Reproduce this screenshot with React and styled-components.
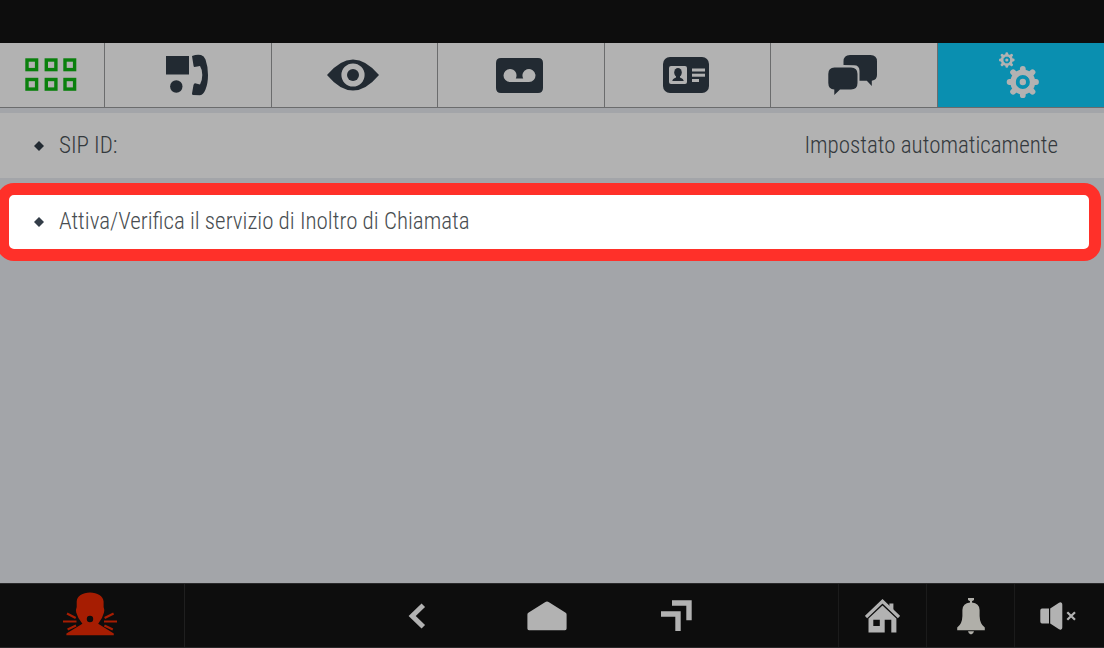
import React from "react";
import styled, { createGlobalStyle } from "styled-components";

const GlobalStyle = createGlobalStyle`
  *, *::before, *::after { box-sizing: border-box; }
  body {
    margin: 0;
    background: #a3a5a9;
    font-family: "Roboto Condensed", Roboto, "Liberation Sans", sans-serif;
    font-weight: 300;
  }
  button { font: inherit; color: inherit; border: 0; margin: 0; padding: 0; background: none; cursor: pointer; }
`;

const Screen = styled.div`
  display: flex;
  flex-direction: column;
  min-height: 100vh;
  overflow: hidden;
`;

const StatusBar = styled.header`
  height: 43px;
  background: #0d0d0d;
`;

const Tabs = styled.nav`
  display: grid;
  grid-template-columns: 105px repeat(6, 1fr);
  height: 65px;
  border-bottom: 1px solid #6b6c6d;
  background: #b2b2b2;
`;

const Tab = styled.button`
  && {
    display: flex;
    align-items: center;
    justify-content: center;
    padding: 0 2px 0 0;
    color: ${(p) => (p.$active ? "#b2b2b2" : "#222a32")};
    background: ${(p) => (p.$active ? "#0a8fb0" : "transparent")};
    border-right: ${(p) => (p.$active ? "0" : "1px solid #6b6c6d")};
  }
`;

const Icon = styled.svg`
  display: block;
  flex: none;
  fill: currentColor;
`;

const Content = styled.main`
  flex: 1;
  display: flex;
  flex-direction: column;
  gap: 5px;
  padding-top: 5px;
`;

const Row = styled.div`
  display: flex;
  align-items: center;
  width: 100%;
  height: 65px;
  padding: 0 46px 0 34px;
  background: #b2b2b2;
  color: #34393d;
  font-size: 23px;
  line-height: 32px;
`;

const HighlightedRow = styled.button`
  && {
    display: flex;
    align-items: center;
    height: 78px;
    margin: 0 3px 0 -3px;
    padding: 0 25px;
    border: 12px solid #ff3029;
    border-radius: 17px;
    background: #ffffff;
    color: #484d51;
    font-size: 23px;
    line-height: 32px;
    text-align: left;
  }
`;

const Label = styled.span`
  margin-left: 15px;
`;

const Value = styled.span`
  margin-left: auto;
`;

const BottomBar = styled.footer`
  display: flex;
  height: 65px;
  padding-right: 3px;
  background: #0d0d0d;
  border-top: 1px solid #29292a;
  border-bottom: 1px solid #29292a;
  color: #b2b2b2;
`;

const BarButton = styled.button`
  && {
    display: flex;
    align-items: center;
    justify-content: center;
    width: ${(p) => p.$width}px;
    padding: ${(p) => p.$padding || "0"};
    color: ${(p) => p.$color || "inherit"};
    border-left: ${(p) => (p.$divided ? "1px solid #1b1b1b" : "0")};
  }
`;

const Navigation = styled.nav`
  flex: 1;
  display: flex;
  justify-content: center;
  padding-left: 70px;
  border-left: 1px solid #1f1f1f;
`;

function Bullet({ color }) {
  return (
    <Icon width="10" height="10" viewBox="0 0 10 10" color={color} aria-hidden="true">
      <path d="M5 0 10 5 5 10 0 5Z" />
    </Icon>
  );
}

function GridIcon() {
  return (
    <Icon width="52" height="34" viewBox="0 0 52 34" aria-hidden="true">
      <g fill="none" stroke="#0a800d" strokeWidth="3.4">
        {[2, 21.3, 40].map((x) =>
          [2, 21.5].map((y) => <rect key={`${x}-${y}`} x={x} y={y} width="9.6" height="9.6" />)
        )}
      </g>
    </Icon>
  );
}

function DoorPhoneIcon() {
  return (
    <Icon width="44" height="42" viewBox="0 0 44 42" aria-hidden="true">
      <rect x="1" y="2" width="23" height="18.5" />
      <circle cx="11.3" cy="32.5" r="6.2" />
      <path d="M27 2 Q32 .2 36 1.1 Q39 2 40.5 5.5 Q43 12.5 43 21 Q43 29.5 40.5 35.5 Q38.5 40.5 35 41.3 L28 41 Q26.8 40.8 27 39.5 L28.5 31 Q29 28.9 31 29.5 L35 30.5 Q37.3 26.5 37.3 21 Q37.3 15.5 35 12 L29.5 13 Q28.7 13 28.5 11.5Z" />
    </Icon>
  );
}

function EyeIcon() {
  return (
    <Icon width="52" height="32" viewBox="0 0 52 32" aria-hidden="true">
      <path fillRule="evenodd" d="M0 16 Q13 .5 26 .5 T52 16 Q39 31.5 26 31.5 T0 16Z M26 4.4 A11.6 11.6 0 1 0 26 27.6 A11.6 11.6 0 1 0 26 4.4Z" />
      <circle cx="26" cy="16" r="6" />
    </Icon>
  );
}

function VoicemailIcon() {
  return (
    <Icon width="47" height="35" viewBox="0 0 47 35" aria-hidden="true">
      <path fillRule="evenodd" d="M5 0H42Q47 0 47 5V30Q47 35 42 35H5Q0 35 0 30V5Q0 0 5 0Z M14 11A6.5 6.5 0 0 0 14 24H33A6.5 6.5 0 1 0 27.2 20.5H19.8A6.5 6.5 0 0 0 14 11Z" />
    </Icon>
  );
}

function ContactIcon() {
  return (
    <Icon width="46" height="36" viewBox="0 0 46 36" aria-hidden="true">
      <rect width="46" height="36" rx="7" />
      <g fill="#b2b2b2">
        <rect x="6" y="9" width="18" height="18" rx="2" />
        <rect x="29" y="11.5" width="13" height="3" />
        <rect x="29" y="16.7" width="13" height="3" />
        <rect x="29" y="22" width="7" height="3" />
      </g>
      <ellipse cx="15" cy="15.6" rx="3.8" ry="4.6" />
      <path d="M13 18H17V20.5Q20.5 21.6 20.7 24H9.3Q9.5 21.6 13 20.5Z" />
    </Icon>
  );
}

function ChatIcon() {
  return (
    <Icon width="50" height="42" viewBox="0 0 50 42" aria-hidden="true">
      <path d="M15.5 11V7.5Q15.5 1 22 1H42.5Q49 1 49 7.5V21Q49 26 43.8 26.7V32L38.8 26.8H31.5V17Q31.5 11.3 26 11.3Z" />
      <path d="M6.5 13.5H23Q29.5 13.5 29.5 20V29Q29.5 35.5 23 35.5H12L6.3 41V35.5Q.3 35 .3 29V20Q.3 13.5 6.5 13.5Z" />
    </Icon>
  );
}

function Gear({ cx, cy, r }) {
  return (
    <g transform={`translate(${cx} ${cy}) scale(${r / 16})`}>
      <g fill="none" stroke="currentColor">
        <circle r="9.8" strokeWidth="5.4" />
        <path d="M0-10V-13.2M0 10V13.2M-10 0H-13.2M10 0H13.2M7.1-7.1L9.7-9.7M7.1 7.1L9.7 9.7M-7.1-7.1L-9.7-9.7M-7.1 7.1L-9.7 9.7" strokeWidth="5.8" strokeLinecap="round" />
      </g>
      <circle r="3.2" />
    </g>
  );
}

function SettingsIcon() {
  return (
    <Icon width="42" height="48" viewBox="0 0 42 48" aria-hidden="true">
      <Gear cx={7.8} cy={9} r={7.8} />
      <Gear cx={23.8} cy={31} r={16} />
    </Icon>
  );
}

function PanicIcon() {
  return (
    <Icon width="54" height="44" viewBox="0 0 54 44" aria-hidden="true">
      <path fillRule="evenodd" d="M13.7 15V9.5C14 4 19.5 .5 27 .5S40.2 4 40.6 9.5V15Q41.8 18 41 20.5Q39.5 26.5 35.2 31.8L50.8 41.5V43.3H3.4V41.5L19.4 31.8Q14.8 26.5 13.2 20.5Q12.5 18 13.7 15Z M27 23.8A3.2 3.2 0 1 0 27 30.2A3.2 3.2 0 1 0 27 23.8Z" />
      <path fill="none" stroke="currentColor" strokeWidth="2.2" d="M4 21.5 12.7 26M0 29.5H13.5M4.6 37.5 13 33.5M50.6 21.5 41.6 26M54 29.5H41M49.8 37.5 41.4 33.5" />
    </Icon>
  );
}

function BackIcon() {
  return (
    <Icon width="18" height="26" viewBox="0 0 18 26" aria-hidden="true">
      <path fill="none" stroke="currentColor" strokeWidth="5" d="M15.3 2.2 4.2 13 15.3 23.8" />
    </Icon>
  );
}

function HomeIcon() {
  return (
    <Icon width="40" height="30" viewBox="0 0 40 30" aria-hidden="true">
      <path d="M20 .4Q21 .4 22 1.3L38.3 11.5Q39.6 12.2 39.6 13.5V27.6Q39.6 29.2 38 29.2H2Q.4 29.2 .4 27.6V13.5Q.4 12.2 1.7 11.5L18 1.3Q19 .4 20 .4Z" />
    </Icon>
  );
}

function ForwardIcon() {
  return (
    <Icon width="31" height="31" viewBox="0 0 31 31" aria-hidden="true">
      <path fill="none" stroke="currentColor" strokeWidth="5.4" d="M11 3H28V20.3M0 14H17V31" />
    </Icon>
  );
}

function HouseIcon() {
  return (
    <Icon width="35" height="34" viewBox="0 0 35 34" aria-hidden="true">
      <path d="M24.4 8V4.6H28.4V12Z" />
      <path fill="none" stroke="currentColor" strokeWidth="3.2" d="M1 18 17.5 2.3 34 18" />
      <path fillRule="evenodd" d="M17.5 6.6 31.4 19.5V33.4H26.3V20.7H19.7V33.4H3.5V19.5Z M8.3 20.7V27H14.8V20.7Z" />
    </Icon>
  );
}

function BellIcon() {
  return (
    <Icon width="28" height="38" viewBox="0 0 28 38" aria-hidden="true">
      <path d="M11 1H17V3L15 4.3V5.5Q22.3 6 22.6 13V19Q22.8 27 27.8 30.5V33.3H.2V30.5Q5.2 27 5.4 19V13Q5.7 6 13 5.5V4.3L11 3Z M11 34.3H17Q16.7 36.4 14 37.6Q11.3 36.4 11 34.3Z" />
    </Icon>
  );
}

function MuteIcon() {
  return (
    <Icon width="36" height="28" viewBox="0 0 36 28" aria-hidden="true">
      <path d="M2 6.5H9V21.5H2Q.3 21.5 .3 19.5V8.5Q.3 6.5 2 6.5Z M10.2 6.5 19 .8Q20.2 0 21.2.5 22.3 1 22.3 2.5V25.5Q22.3 27 21.2 27.5 20.2 28 19 27.2L10.2 21.5Z" />
      <path fill="none" stroke="currentColor" strokeWidth="2.2" d="M27.3 10.2 35 17.8M35 10.2 27.3 17.8" />
    </Icon>
  );
}

const tabs = [
  { label: "Menu", icon: GridIcon },
  { label: "Videocitofono", icon: DoorPhoneIcon },
  { label: "Telecamere", icon: EyeIcon },
  { label: "Segreteria", icon: VoicemailIcon },
  { label: "Rubrica", icon: ContactIcon },
  { label: "Messaggi", icon: ChatIcon },
  { label: "Impostazioni", icon: SettingsIcon, active: true },
];

export default function App() {
  return (
    <Screen>
      <GlobalStyle />
      <StatusBar />
      <Tabs>
        {tabs.map(({ label, icon: TabIcon, active }) => (
          <Tab key={label} aria-label={label} $active={active}>
            <TabIcon />
          </Tab>
        ))}
      </Tabs>
      <Content>
        <Row>
          <Bullet color="#222a32" />
          <Label>SIP ID:</Label>
          <Value>Impostato automaticamente</Value>
        </Row>
        <HighlightedRow>
          <Bullet color="#333d48" />
          <Label>Attiva/Verifica il servizio di Inoltro di Chiamata</Label>
        </HighlightedRow>
      </Content>
      <BottomBar>
        <BarButton $width={184} $padding="0 4px 4px 0" $color="#a61d02" aria-label="Panico"><PanicIcon /></BarButton>
        <Navigation>
          <BarButton $width={130} aria-label="Indietro"><BackIcon /></BarButton>
          <BarButton $width={130} aria-label="Home"><HomeIcon /></BarButton>
          <BarButton $width={130} aria-label="Avanti"><ForwardIcon /></BarButton>
        </Navigation>
        <BarButton $width={88} $divided aria-label="Casa"><HouseIcon /></BarButton>
        <BarButton $width={88} $divided $color="#b0afa9" aria-label="Notifiche"><BellIcon /></BarButton>
        <BarButton $width={87} $divided aria-label="Audio disattivato"><MuteIcon /></BarButton>
      </BottomBar>
    </Screen>
  );
}
